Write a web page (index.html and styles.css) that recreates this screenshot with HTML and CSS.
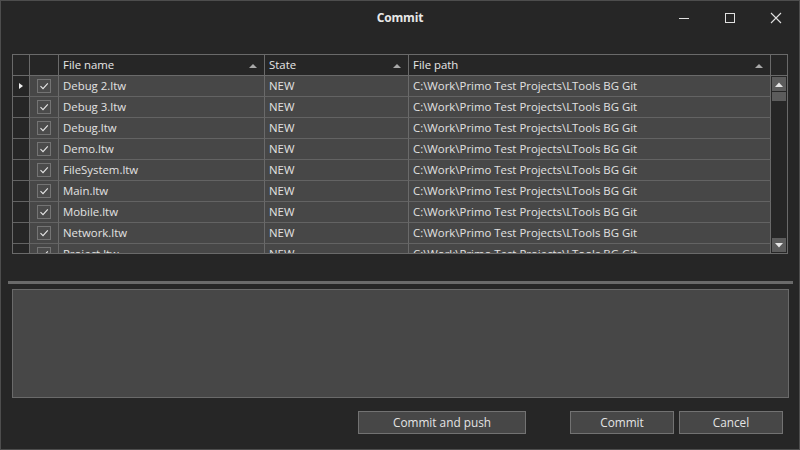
FILE: index.html
```html
<!DOCTYPE html>
<html>
<head>
<meta charset="utf-8">
<link rel="stylesheet" href="styles.css">
</head>
<body>
<div class="window">
  <div class="titlebar">
    <div></div>
    <div class="title">Commit</div>
    <div class="controls">
      <span class="ctl"><svg width="12" height="12" viewBox="0 0 12 12"><path d="M1 6.5H11" stroke="#e0e0e0" stroke-width="1"/></svg></span>
      <span class="ctl"><svg width="12" height="12" viewBox="0 0 12 12"><rect x="1.5" y="1.5" width="9" height="9" fill="none" stroke="#e0e0e0" stroke-width="1"/></svg></span>
      <span class="ctl"><svg width="12" height="12" viewBox="0 0 12 12"><path d="M1 1L11 11M11 1L1 11" stroke="#e0e0e0" stroke-width="1.1"/></svg></span>
    </div>
  </div>

  <div class="grid">
    <div class="table">
      <div class="row head">
        <div class="cell rh"></div>
        <div class="cell ck"></div>
        <div class="cell txt">File name<i class="sort"></i></div>
        <div class="cell txt">State<i class="sort"></i></div>
        <div class="cell txt">File path<i class="sort"></i></div>
      </div>
      <div class="row">
        <div class="cell rh"><i class="cur"></i></div>
        <div class="cell ck"><span class="box"><svg width="10" height="10" viewBox="0 0 10 10"><path d="M1.5 5.2L4 7.6L8.8 2.4" fill="none" stroke="#e8e8e8" stroke-width="1.1"/></svg></span></div>
        <div class="cell txt">Debug 2.ltw</div><div class="cell txt">NEW</div><div class="cell txt">C:\Work\Primo Test Projects\LTools BG Git</div>
      </div>
      <div class="row">
        <div class="cell rh"></div>
        <div class="cell ck"><span class="box"><svg width="10" height="10" viewBox="0 0 10 10"><path d="M1.5 5.2L4 7.6L8.8 2.4" fill="none" stroke="#e8e8e8" stroke-width="1.1"/></svg></span></div>
        <div class="cell txt">Debug 3.ltw</div><div class="cell txt">NEW</div><div class="cell txt">C:\Work\Primo Test Projects\LTools BG Git</div>
      </div>
      <div class="row">
        <div class="cell rh"></div>
        <div class="cell ck"><span class="box"><svg width="10" height="10" viewBox="0 0 10 10"><path d="M1.5 5.2L4 7.6L8.8 2.4" fill="none" stroke="#e8e8e8" stroke-width="1.1"/></svg></span></div>
        <div class="cell txt">Debug.ltw</div><div class="cell txt">NEW</div><div class="cell txt">C:\Work\Primo Test Projects\LTools BG Git</div>
      </div>
      <div class="row">
        <div class="cell rh"></div>
        <div class="cell ck"><span class="box"><svg width="10" height="10" viewBox="0 0 10 10"><path d="M1.5 5.2L4 7.6L8.8 2.4" fill="none" stroke="#e8e8e8" stroke-width="1.1"/></svg></span></div>
        <div class="cell txt">Demo.ltw</div><div class="cell txt">NEW</div><div class="cell txt">C:\Work\Primo Test Projects\LTools BG Git</div>
      </div>
      <div class="row">
        <div class="cell rh"></div>
        <div class="cell ck"><span class="box"><svg width="10" height="10" viewBox="0 0 10 10"><path d="M1.5 5.2L4 7.6L8.8 2.4" fill="none" stroke="#e8e8e8" stroke-width="1.1"/></svg></span></div>
        <div class="cell txt">FileSystem.ltw</div><div class="cell txt">NEW</div><div class="cell txt">C:\Work\Primo Test Projects\LTools BG Git</div>
      </div>
      <div class="row">
        <div class="cell rh"></div>
        <div class="cell ck"><span class="box"><svg width="10" height="10" viewBox="0 0 10 10"><path d="M1.5 5.2L4 7.6L8.8 2.4" fill="none" stroke="#e8e8e8" stroke-width="1.1"/></svg></span></div>
        <div class="cell txt">Main.ltw</div><div class="cell txt">NEW</div><div class="cell txt">C:\Work\Primo Test Projects\LTools BG Git</div>
      </div>
      <div class="row">
        <div class="cell rh"></div>
        <div class="cell ck"><span class="box"><svg width="10" height="10" viewBox="0 0 10 10"><path d="M1.5 5.2L4 7.6L8.8 2.4" fill="none" stroke="#e8e8e8" stroke-width="1.1"/></svg></span></div>
        <div class="cell txt">Mobile.ltw</div><div class="cell txt">NEW</div><div class="cell txt">C:\Work\Primo Test Projects\LTools BG Git</div>
      </div>
      <div class="row">
        <div class="cell rh"></div>
        <div class="cell ck"><span class="box"><svg width="10" height="10" viewBox="0 0 10 10"><path d="M1.5 5.2L4 7.6L8.8 2.4" fill="none" stroke="#e8e8e8" stroke-width="1.1"/></svg></span></div>
        <div class="cell txt">Network.ltw</div><div class="cell txt">NEW</div><div class="cell txt">C:\Work\Primo Test Projects\LTools BG Git</div>
      </div>
      <div class="row">
        <div class="cell rh"></div>
        <div class="cell ck"><span class="box"><svg width="10" height="10" viewBox="0 0 10 10"><path d="M1.5 5.2L4 7.6L8.8 2.4" fill="none" stroke="#e8e8e8" stroke-width="1.1"/></svg></span></div>
        <div class="cell txt">Project.ltw</div><div class="cell txt">NEW</div><div class="cell txt">C:\Work\Primo Test Projects\LTools BG Git</div>
      </div>
    </div>
    <div class="scrollbar">
      <div class="sb-head"></div>
      <div class="sb-track">
        <div class="sb-btn"><svg width="8" height="5" viewBox="0 0 8 5"><path d="M0 5L4 0.5L8 5Z" fill="#e6e6e6"/></svg></div>
        <div class="sb-thumb"></div>
        <div class="sb-space"></div>
        <div class="sb-btn"><svg width="8" height="5" viewBox="0 0 8 5"><path d="M0 0L4 4.5L8 0Z" fill="#e6e6e6"/></svg></div>
      </div>
    </div>
  </div>

  <div class="splitter"></div>
  <div class="message"></div>

  <div class="buttons">
    <div class="btn wide">Commit and push</div>
    <div class="btn">Commit</div>
    <div class="btn">Cancel</div>
  </div>
</div>
</body>
</html>
```

FILE: styles.css
```css
* { box-sizing: border-box; }
html, body { margin: 0; padding: 0; background: #262626; }
body {
  width: 800px;
  height: 450px;
  overflow: hidden;
  font-family: "Open Sans", "Noto Sans", sans-serif;
  font-size: 11.4px;
  color: #e2e2e2;
}
.window {
  width: 800px;
  height: 450px;
  border: 1px solid #4d4d4d;
  background: #262626;
  display: flex;
  flex-direction: column;
}
.titlebar {
  height: 33px;
  display: grid;
  grid-template-columns: 1fr auto 1fr;
  align-items: center;
}
.title {
  font-weight: bold;
  font-size: 12px;
  color: #e8e8e8;
  letter-spacing: -0.2px;
}
.controls {
  justify-self: end;
  display: flex;
  height: 33px;
}
.ctl {
  width: 46px;
  height: 33px;
  display: flex;
  align-items: center;
  justify-content: center;
}

.grid {
  margin-top: 20px;
  margin-left: 11px;
  width: 776px;
  height: 200px;
  border: 1px solid #6a6a6a;
  display: flex;
  overflow: hidden;
}
.table {
  flex: 1;
  overflow: hidden;
}
.row {
  display: grid;
  grid-template-columns: 17px 29px 206px 144px 1fr;
  height: 21px;
}
.cell {
  border-right: 1px solid #6a6a6a;
  border-bottom: 1px solid #636363;
  background: #474747;
  display: flex;
  align-items: center;
  white-space: nowrap;
  overflow: hidden;
}
.row .cell.rh { background: #262626; justify-content: center; }
.txt { padding-left: 4px; padding-bottom: 1px; }
.head .cell { background: #262626; border-bottom-color: #6a6a6a; position: relative; color: #e6e6e6; }
.sort {
  position: absolute;
  right: 7px;
  top: 9px;
  width: 0; height: 0;
  border-left: 4px solid transparent;
  border-right: 4px solid transparent;
  border-bottom: 4px solid #a9a9a9;
}
.cur {
  width: 0; height: 0;
  border-top: 3.5px solid transparent;
  border-bottom: 3.5px solid transparent;
  border-left: 4px solid #f0f0f0;
}
.ck { justify-content: center; }
.box {
  width: 14px;
  height: 14px;
  border: 1px solid #747474;
  background: #4b4b4b;
  display: flex;
  align-items: center;
  justify-content: center;
  margin-left: -1px;
}

.scrollbar {
  width: 16px;
  display: flex;
  flex-direction: column;
  background: #262626;
}
.sb-head {
  height: 21px;
  border-bottom: 1px solid #6a6a6a;
  flex: none;
}
.sb-track {
  flex: 1;
  display: flex;
  flex-direction: column;
  padding: 1px;
}
.sb-btn {
  height: 14px;
  background: #5c5c5c;
  display: flex;
  align-items: center;
  justify-content: center;
  flex: none;
}
.sb-thumb {
  height: 9px;
  margin-top: 1px;
  background: #5c5c5c;
  flex: none;
}
.sb-space { flex: 1; }

.splitter {
  margin-top: 27px;
  margin-left: 7px;
  width: 785px;
  height: 3px;
  background: #6a6a6a;
}
.message {
  margin-top: 5px;
  margin-left: 11px;
  width: 777px;
  height: 109px;
  background: #474747;
  border: 1px solid #6a6a6a;
}
.buttons {
  margin-top: 13px;
  display: flex;
  justify-content: flex-end;
  padding-right: 16px;
}
.btn {
  width: 104px;
  height: 23px;
  border: 1px solid #727272;
  background: #474747;
  display: flex;
  align-items: center;
  justify-content: center;
  color: #e4e4e4;
  font-size: 11.8px;
  margin-left: 5px;
  padding-bottom: 1px;
}
.btn.wide { width: 168px; margin-right: 39px; }
```
